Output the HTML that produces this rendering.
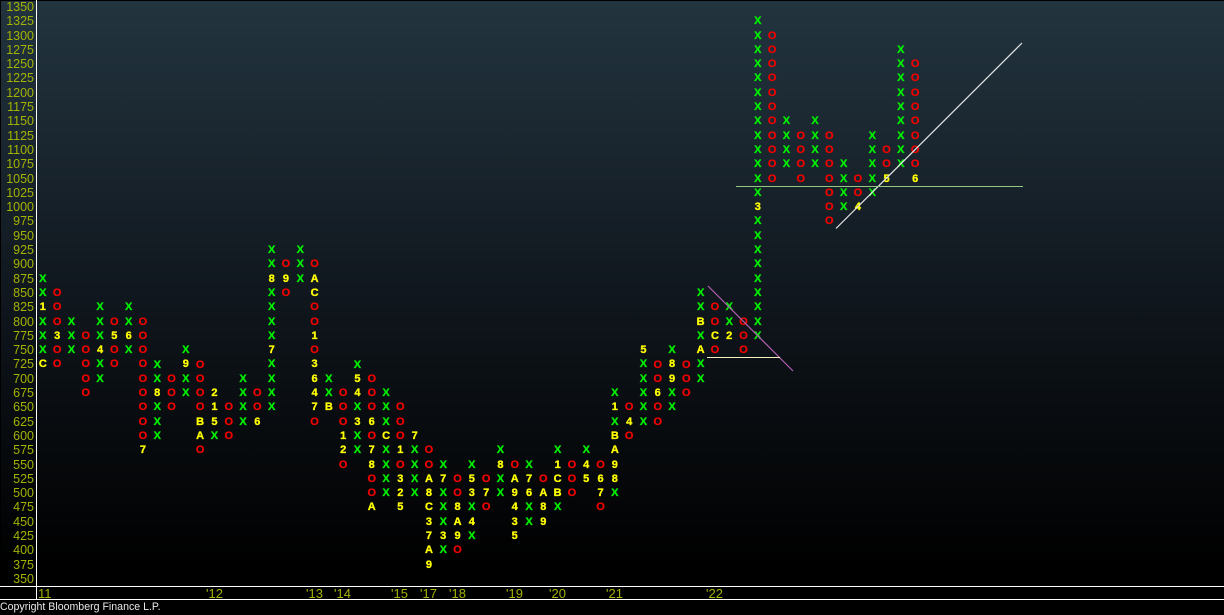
<!DOCTYPE html>
<html><head><meta charset="utf-8"><title>Point and Figure Chart</title>
<style>
html,body{margin:0;padding:0;background:#000;}
#w{position:relative;width:1224px;height:615px;overflow:hidden;background:#000;font-family:"Liberation Sans",sans-serif;}
#g{position:absolute;left:1px;top:1px;width:1223px;height:585px;background:linear-gradient(#22343f 0,#1a262f 25%,#0e141a 55%,#000 97%);}
.l{position:absolute;background:#fff;}
#y{position:absolute;left:0;top:0;width:34px;text-align:right;color:#a3b300;font-size:12.5px;}
#y div{height:14.3px;line-height:14.3px;}
.c{position:absolute;left:calc(35.7px + var(--c)*14.3px);top:calc(var(--r)*14.3px);width:14.3px;text-align:center;font:bold 11px/14.3px "Liberation Sans",sans-serif;-webkit-text-stroke:.3px currentColor;}
.c b,.c u,.c i{display:block;height:14.3px;font-style:normal;text-decoration:none;font-weight:bold;}
.c b{color:#00f000;}
.c u{color:#f00000;}
.c i{color:#ffff00;}
.x{position:absolute;top:586px;color:#a3b300;font-size:13px;line-height:15px;white-space:pre;}
#cp{position:absolute;left:0;top:601px;color:#e8e8e8;font-size:10.6px;line-height:13px;white-space:pre;}
svg{position:absolute;left:0;top:0;}
</style></head><body><div id="w">
<div id="g"></div>
<div id="y"><div>1350</div><div>1325</div><div>1300</div><div>1275</div><div>1250</div><div>1225</div><div>1200</div><div>1175</div><div>1150</div><div>1125</div><div>1100</div><div>1075</div><div>1050</div><div>1025</div><div>1000</div><div>975</div><div>950</div><div>925</div><div>900</div><div>875</div><div>850</div><div>825</div><div>800</div><div>775</div><div>750</div><div>725</div><div>700</div><div>675</div><div>650</div><div>625</div><div>600</div><div>575</div><div>550</div><div>525</div><div>500</div><div>475</div><div>450</div><div>425</div><div>400</div><div>375</div><div>350</div></div>

<div class="c" style="--c:0;--r:19"><b>X</b><b>X</b><i>1</i><b>X</b><b>X</b><b>X</b><i>C</i></div>
<div class="c" style="--c:1;--r:20"><u>O</u><u>O</u><u>O</u><i>3</i><u>O</u><u>O</u></div>
<div class="c" style="--c:2;--r:22"><b>X</b><b>X</b><b>X</b></div>
<div class="c" style="--c:3;--r:23"><u>O</u><u>O</u><u>O</u><u>O</u><u>O</u></div>
<div class="c" style="--c:4;--r:21"><b>X</b><b>X</b><b>X</b><i>4</i><b>X</b><b>X</b></div>
<div class="c" style="--c:5;--r:22"><u>O</u><i>5</i><u>O</u><u>O</u></div>
<div class="c" style="--c:6;--r:21"><b>X</b><b>X</b><i>6</i><b>X</b></div>
<div class="c" style="--c:7;--r:22"><u>O</u><u>O</u><u>O</u><u>O</u><u>O</u><u>O</u><u>O</u><u>O</u><u>O</u><i>7</i></div>
<div class="c" style="--c:8;--r:25"><b>X</b><b>X</b><i>8</i><b>X</b><b>X</b><b>X</b></div>
<div class="c" style="--c:9;--r:26"><u>O</u><u>O</u><u>O</u></div>
<div class="c" style="--c:10;--r:24"><b>X</b><i>9</i><b>X</b><b>X</b></div>
<div class="c" style="--c:11;--r:25"><u>O</u><u>O</u><u>O</u><u>O</u><i>B</i><i>A</i><u>O</u></div>
<div class="c" style="--c:12;--r:27"><i>2</i><i>1</i><i>5</i><b>X</b></div>
<div class="c" style="--c:13;--r:28"><u>O</u><u>O</u><u>O</u></div>
<div class="c" style="--c:14;--r:26"><b>X</b><b>X</b><b>X</b><b>X</b></div>
<div class="c" style="--c:15;--r:27"><u>O</u><u>O</u><i>6</i></div>
<div class="c" style="--c:16;--r:17"><b>X</b><b>X</b><i>8</i><b>X</b><b>X</b><b>X</b><b>X</b><i>7</i><b>X</b><b>X</b><b>X</b><b>X</b></div>
<div class="c" style="--c:17;--r:18"><u>O</u><i>9</i><u>O</u></div>
<div class="c" style="--c:18;--r:17"><b>X</b><b>X</b><b>X</b></div>
<div class="c" style="--c:19;--r:18"><u>O</u><i>A</i><i>C</i><u>O</u><u>O</u><i>1</i><u>O</u><i>3</i><i>6</i><i>4</i><i>7</i><u>O</u></div>
<div class="c" style="--c:20;--r:26"><b>X</b><b>X</b><i>B</i></div>
<div class="c" style="--c:21;--r:27"><u>O</u><u>O</u><u>O</u><i>1</i><i>2</i><u>O</u></div>
<div class="c" style="--c:22;--r:25"><b>X</b><i>5</i><i>4</i><b>X</b><i>3</i><b>X</b><b>X</b></div>
<div class="c" style="--c:23;--r:26"><u>O</u><u>O</u><u>O</u><i>6</i><u>O</u><i>7</i><i>8</i><u>O</u><u>O</u><i>A</i></div>
<div class="c" style="--c:24;--r:27"><b>X</b><b>X</b><b>X</b><i>C</i><b>X</b><b>X</b><b>X</b><b>X</b></div>
<div class="c" style="--c:25;--r:28"><u>O</u><u>O</u><u>O</u><i>1</i><u>O</u><i>3</i><i>2</i><i>5</i></div>
<div class="c" style="--c:26;--r:30"><i>7</i><b>X</b><b>X</b><b>X</b><b>X</b></div>
<div class="c" style="--c:27;--r:31"><u>O</u><u>O</u><i>A</i><i>8</i><i>C</i><i>3</i><i>7</i><i>A</i><i>9</i></div>
<div class="c" style="--c:28;--r:32"><b>X</b><i>7</i><b>X</b><b>X</b><b>X</b><i>3</i><b>X</b></div>
<div class="c" style="--c:29;--r:33"><u>O</u><u>O</u><i>8</i><i>A</i><i>9</i><u>O</u></div>
<div class="c" style="--c:30;--r:32"><b>X</b><i>5</i><i>3</i><b>X</b><i>4</i><b>X</b></div>
<div class="c" style="--c:31;--r:33"><u>O</u><i>7</i><u>O</u></div>
<div class="c" style="--c:32;--r:31"><b>X</b><i>8</i><b>X</b><b>X</b></div>
<div class="c" style="--c:33;--r:32"><u>O</u><i>A</i><i>9</i><i>4</i><i>3</i><i>5</i></div>
<div class="c" style="--c:34;--r:32"><b>X</b><i>7</i><i>6</i><b>X</b><b>X</b></div>
<div class="c" style="--c:35;--r:33"><u>O</u><i>A</i><i>8</i><i>9</i></div>
<div class="c" style="--c:36;--r:31"><b>X</b><i>1</i><i>C</i><i>B</i><b>X</b></div>
<div class="c" style="--c:37;--r:32"><u>O</u><u>O</u><u>O</u></div>
<div class="c" style="--c:38;--r:31"><b>X</b><i>4</i><i>5</i></div>
<div class="c" style="--c:39;--r:32"><u>O</u><i>6</i><i>7</i><u>O</u></div>
<div class="c" style="--c:40;--r:27"><b>X</b><i>1</i><b>X</b><i>B</i><i>A</i><i>9</i><i>8</i><b>X</b></div>
<div class="c" style="--c:41;--r:28"><u>O</u><i>4</i><u>O</u></div>
<div class="c" style="--c:42;--r:24"><i>5</i><b>X</b><b>X</b><b>X</b><b>X</b><b>X</b></div>
<div class="c" style="--c:43;--r:25"><u>O</u><u>O</u><i>6</i><u>O</u><u>O</u></div>
<div class="c" style="--c:44;--r:24"><b>X</b><i>8</i><i>9</i><b>X</b><b>X</b></div>
<div class="c" style="--c:45;--r:25"><u>O</u><u>O</u><u>O</u></div>
<div class="c" style="--c:46;--r:20"><b>X</b><b>X</b><i>B</i><b>X</b><i>A</i><b>X</b><b>X</b></div>
<div class="c" style="--c:47;--r:21"><u>O</u><u>O</u><i>C</i><u>O</u></div>
<div class="c" style="--c:48;--r:21"><b>X</b><b>X</b><i>2</i></div>
<div class="c" style="--c:49;--r:22"><u>O</u><u>O</u><u>O</u></div>
<div class="c" style="--c:50;--r:1"><b>X</b><b>X</b><b>X</b><b>X</b><b>X</b><b>X</b><b>X</b><b>X</b><b>X</b><b>X</b><b>X</b><b>X</b><b>X</b><i>3</i><b>X</b><b>X</b><b>X</b><b>X</b><b>X</b><b>X</b><b>X</b><b>X</b><b>X</b></div>
<div class="c" style="--c:51;--r:2"><u>O</u><u>O</u><u>O</u><u>O</u><u>O</u><u>O</u><u>O</u><u>O</u><u>O</u><u>O</u><u>O</u></div>
<div class="c" style="--c:52;--r:8"><b>X</b><b>X</b><b>X</b><b>X</b></div>
<div class="c" style="--c:53;--r:9"><u>O</u><u>O</u><u>O</u><u>O</u></div>
<div class="c" style="--c:54;--r:8"><b>X</b><b>X</b><b>X</b><b>X</b></div>
<div class="c" style="--c:55;--r:9"><u>O</u><u>O</u><u>O</u><u>O</u><u>O</u><u>O</u><u>O</u></div>
<div class="c" style="--c:56;--r:11"><b>X</b><b>X</b><b>X</b><b>X</b></div>
<div class="c" style="--c:57;--r:12"><u>O</u><u>O</u><i>4</i></div>
<div class="c" style="--c:58;--r:9"><b>X</b><b>X</b><b>X</b><b>X</b><b>X</b></div>
<div class="c" style="--c:59;--r:10"><u>O</u><u>O</u><i>5</i></div>
<div class="c" style="--c:60;--r:3"><b>X</b><b>X</b><b>X</b><b>X</b><b>X</b><b>X</b><b>X</b><b>X</b><b>X</b></div>
<div class="c" style="--c:61;--r:4"><u>O</u><u>O</u><u>O</u><u>O</u><u>O</u><u>O</u><u>O</u><u>O</u><i>6</i></div>

<svg width="1224" height="615" viewBox="0 0 1224 615">
<line x1="836" y1="228.5" x2="1022" y2="43" stroke="#e6e6e6" stroke-width="1.2"/>
<line x1="736" y1="186.5" x2="1023" y2="186.5" stroke="#93c983" stroke-width="1"/>
<line x1="708" y1="286" x2="793" y2="371" stroke="#b060b0" stroke-width="1.2"/>
<line x1="707" y1="357.5" x2="780" y2="357.5" stroke="#f5f0c0" stroke-width="1"/>
</svg>

<div class="l" style="left:36px;top:0;width:1px;height:599px"></div>
<div class="l" style="left:0;top:586px;width:1224px;height:1px"></div>
<div class="l" style="left:0;top:599px;width:1224px;height:1px"></div>

<div class="x" style="left:38px">11</div>
<div class="x" style="left:206px">'12</div>
<div class="x" style="left:306px">'13</div>
<div class="x" style="left:334px">'14</div>
<div class="x" style="left:391px">'15</div>
<div class="x" style="left:420px">'17</div>
<div class="x" style="left:449px">'18</div>
<div class="x" style="left:506px">'19</div>
<div class="x" style="left:549px">'20</div>
<div class="x" style="left:606px">'21</div>
<div class="x" style="left:706px">'22</div>
<div id="cp">Copyright Bloomberg Finance L.P.</div>
</div></body></html>
